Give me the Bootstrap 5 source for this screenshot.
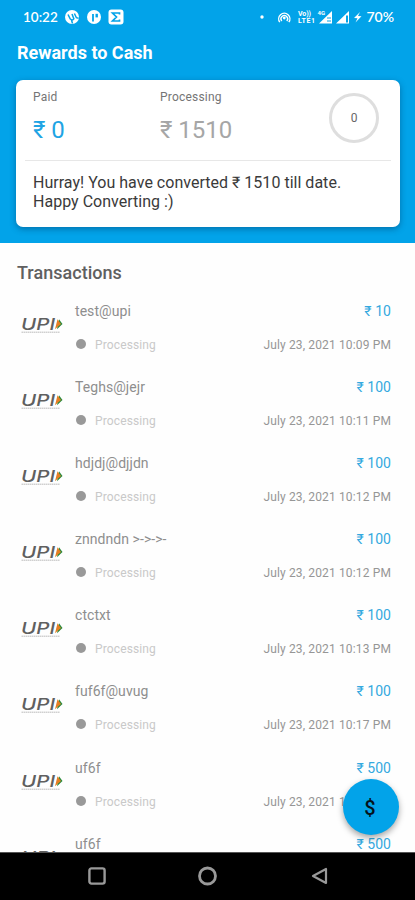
<!DOCTYPE html>
<html lang="en">
<head>
<meta charset="utf-8">
<meta name="viewport" content="width=device-width, initial-scale=1">
<title>Rewards to Cash</title>
<link href="https://cdn.jsdelivr.net/npm/bootstrap@5.3.0/dist/css/bootstrap.min.css" rel="stylesheet">
<style>
  body { font-family: Roboto, "Noto Sans", sans-serif; background: #fefefe; }
  .screen { width: 415px; height: 900px; }
  .top-area { background: #02a3e9; height: 243px; padding: 0 15px 0 16px; }
  .status { height: 34px; padding-left: 7px; padding-right: 6px; font: 600 13px/34px Lato, sans-serif; }
  .clock { width: 42px; font-size: 13.5px; }
  .battery { font-size: 14px; }
  .page-title { font-size: 18px; line-height: 24px; margin-top: 7px; height: 39px; font-weight: 700; padding-left: 1px; }
  .summary { height: 147px; border-radius: 7px; box-shadow: 0 2px 6px rgba(0,40,80,.4); padding: 0 9px; }
  .figures { height: 81px; padding: 7px 7px 0 8px; border-bottom: 1px solid #e7e7e7; }
  .paid-col { width: 127px; }
  .cap { font-size: 12px; line-height: 20px; color: #757575; letter-spacing: .2px; }
  .big { font-size: 24px; line-height: 32px; margin-top: 7px; color: #a6a6a6; }
  .big.blue { color: #1fa4e4; }
  .ring { width: 50px; height: 50px; border: 3px solid #dedede; border-radius: 50%; margin-top: 6px; margin-left: auto; margin-right: 5px; font-size: 12px; color: #666; }
  .message { font-size: 16px; line-height: 19px; padding: 12px 8px 0; color: #3a3a3a; letter-spacing: .02px; }
  .section-title { font-size: 18px; line-height: 24px; padding: 18px 17px 0; height: 48px; font-weight: 500; color: #606060; letter-spacing: .03px; }
  .list-area { height: 609px; }
  .txn { height: 76.1px; padding: 10px 24px 0 21px; }
  .txn svg { width: 42px; height: 18px; margin-top: 16px; margin-right: 12px; }
  .who { font-size: 14px; line-height: 21px; height: 20px; color: #8e8e8e; letter-spacing: .06px; }
  .sum { font-size: 14px; line-height: 20px; color: #34a9df; letter-spacing: .05px; }
  .meta { margin-top: 14px; font-size: 12px; line-height: 20px; }
  .dot { width: 10px; height: 10px; background: #999; margin: 0 9px 2px 1px; }
  .state { color: #c9c9c9; letter-spacing: .13px; }
  .when { color: #969696; letter-spacing: .14px; }
  .fab { right: 16px; bottom: 65px; width: 56px; height: 56px; background: #02a3e9; color: #05131c; font-size: 20px; font-weight: 500; padding: 2px 2px 0 0; box-shadow: 0 3px 6px rgba(0,0,0,.35); }
  .navkeys { height: 48px; background: #000; border-top: 1px solid #555; padding: 0 85px 1px 86px; }
</style>
<script src="https://cdn.jsdelivr.net/npm/bootstrap@5.3.0/dist/js/bootstrap.bundle.min.js"></script>
</head>
<body>
<svg class="d-none" aria-hidden="true">
  <symbol id="upi" viewBox="0 0 42 18">
    <text x="0" y="12.8" font-family="Inter, sans-serif" font-size="15.5" font-weight="500" font-style="italic" fill="#606060" textLength="34" lengthAdjust="spacingAndGlyphs">UPI</text>
    <path d="M38 2.3 41.5 7 36 12.3z" fill="#278a3c"/>
    <path d="M36.5 2.3 40 7 34 12.3z" fill="#e57f24"/>
    <path d="M.5 15.2H39" stroke="#bbb" stroke-width="1" stroke-dasharray="1.6 .4"/>
  </symbol>
</svg>
<div class="screen position-relative overflow-hidden d-flex flex-column">
  <header class="top-area text-white">
    <div class="status d-flex align-items-center">
      <span class="clock">10:22</span>
      <svg width="60" height="16" viewBox="0 0 60 16" fill="#fff">
        <circle cx="7" cy="8" r="7"/><path d="M3 5.5 5.3 10q2.2 2 3.5-.2L7 5M9.4 4.5l2 4.2 2.2.5M6.5 11l1 3.5" fill="none" stroke="#02a3e9" stroke-width="1.5"/>
        <circle cx="29" cy="8" r="7"/><path d="M28 12.5V5" fill="none" stroke="#02a3e9" stroke-width="1.8"/><path d="M30.5 4.8h2.4v3.6h-2.4z" fill="#02a3e9"/>
        <rect x="43.5" y=".5" width="15" height="15" rx="3"/><path d="M54.5 5.4V4h-7l4 4-4 4h7v-1.5" fill="none" stroke="#02a3e9" stroke-width="1.7"/>
      </svg>
      <svg class="ms-auto" width="104" height="16" viewBox="0 0 104 16" fill="#fff">
        <circle cx="3" cy="8" r="1.7"/>
        <g fill="none" stroke="#fff" stroke-width="1.4"><path d="M20.8 13.2a5.6 5.6 0 1 1 9 0M22.8 12a3.3 3.3 0 1 1 5 0"/></g><circle cx="25.3" cy="9" r="1.4"/>
        <text x="39" y="7.3" font-family="Roboto, sans-serif" font-size="7" font-weight="700" textLength="13">Vo))</text>
        <text x="39" y="14" font-family="Roboto, sans-serif" font-size="7" font-weight="700" textLength="17">LTE1</text>
        <path d="M60 14.5 73 2v12.5zM77 14.5 90 2v12.5z"/><path d="M87 6.5h2v7h-2z" fill="#02a3e9"/>
        <text x="58.5" y="6" font-family="Roboto, sans-serif" font-size="6" font-weight="700">4G</text>
        <path d="M68 9h4M68 12h4" stroke="#02a3e9"/>
        <path d="m101 3-6 6 3.5.2-2 4.3 6-6.2-3.5-.2z"/>
      </svg>
      <span class="battery">&nbsp;70%</span>
    </div>
    <h1 class="page-title mb-0">Rewards to Cash</h1>
    <section class="summary bg-white">
      <div class="figures d-flex">
        <div class="paid-col"><div class="cap">Paid</div><div class="big blue">₹ 0</div></div>
        <div><div class="cap">Processing</div><div class="big">₹ 1510</div></div>
        <div class="ring d-flex align-items-center justify-content-center">0</div>
      </div>
      <p class="message mb-0">Hurray! You have converted ₹ 1510 till date.<br>Happy Converting :)</p>
    </section>
  </header>
  <main class="list-area overflow-hidden">
    <h2 class="section-title mb-0">Transactions</h2>
    <div class="txn d-flex"><svg><use href="#upi"/></svg><div class="flex-grow-1"><div class="d-flex justify-content-between"><span class="who">test@upi</span><span class="sum">₹ 10</span></div><div class="meta d-flex align-items-center"><span class="dot rounded-circle"></span><span class="state">Processing</span><span class="when ms-auto">July 23, 2021 10:09 PM</span></div></div></div>
    <div class="txn d-flex"><svg><use href="#upi"/></svg><div class="flex-grow-1"><div class="d-flex justify-content-between"><span class="who">Teghs@jejr</span><span class="sum">₹ 100</span></div><div class="meta d-flex align-items-center"><span class="dot rounded-circle"></span><span class="state">Processing</span><span class="when ms-auto">July 23, 2021 10:11 PM</span></div></div></div>
    <div class="txn d-flex"><svg><use href="#upi"/></svg><div class="flex-grow-1"><div class="d-flex justify-content-between"><span class="who">hdjdj@djjdn</span><span class="sum">₹ 100</span></div><div class="meta d-flex align-items-center"><span class="dot rounded-circle"></span><span class="state">Processing</span><span class="when ms-auto">July 23, 2021 10:12 PM</span></div></div></div>
    <div class="txn d-flex"><svg><use href="#upi"/></svg><div class="flex-grow-1"><div class="d-flex justify-content-between"><span class="who">znndndn &gt;-&gt;-&gt;-</span><span class="sum">₹ 100</span></div><div class="meta d-flex align-items-center"><span class="dot rounded-circle"></span><span class="state">Processing</span><span class="when ms-auto">July 23, 2021 10:12 PM</span></div></div></div>
    <div class="txn d-flex"><svg><use href="#upi"/></svg><div class="flex-grow-1"><div class="d-flex justify-content-between"><span class="who">ctctxt</span><span class="sum">₹ 100</span></div><div class="meta d-flex align-items-center"><span class="dot rounded-circle"></span><span class="state">Processing</span><span class="when ms-auto">July 23, 2021 10:13 PM</span></div></div></div>
    <div class="txn d-flex"><svg><use href="#upi"/></svg><div class="flex-grow-1"><div class="d-flex justify-content-between"><span class="who">fuf6f@uvug</span><span class="sum">₹ 100</span></div><div class="meta d-flex align-items-center"><span class="dot rounded-circle"></span><span class="state">Processing</span><span class="when ms-auto">July 23, 2021 10:17 PM</span></div></div></div>
    <div class="txn d-flex"><svg><use href="#upi"/></svg><div class="flex-grow-1"><div class="d-flex justify-content-between"><span class="who">uf6f</span><span class="sum">₹ 500</span></div><div class="meta d-flex align-items-center"><span class="dot rounded-circle"></span><span class="state">Processing</span><span class="when ms-auto">July 23, 2021 10:17 PM</span></div></div></div>
    <div class="txn d-flex"><svg><use href="#upi"/></svg><div class="flex-grow-1"><div class="d-flex justify-content-between"><span class="who">uf6f</span><span class="sum">₹ 500</span></div></div></div>
  </main>
  <button class="fab btn rounded-circle border-0 position-absolute" type="button" aria-label="Convert">$</button>
  <nav class="navkeys d-flex justify-content-between align-items-center">
    <svg width="22" height="22" viewBox="0 0 22 22" fill="none" stroke="#999" stroke-width="2.4"><rect x="3.4" y="3.4" width="15.2" height="15.2" rx="2"/></svg>
    <svg width="22" height="22" viewBox="0 0 22 22" fill="none" stroke="#999" stroke-width="2.8"><circle cx="10.5" cy="11" r="8"/></svg>
    <svg width="22" height="22" viewBox="0 0 22 22" fill="none" stroke="#999" stroke-width="2.2" stroke-linejoin="round"><path d="M18 4v14L5 11z"/></svg>
  </nav>
</div>
</body>
</html>
